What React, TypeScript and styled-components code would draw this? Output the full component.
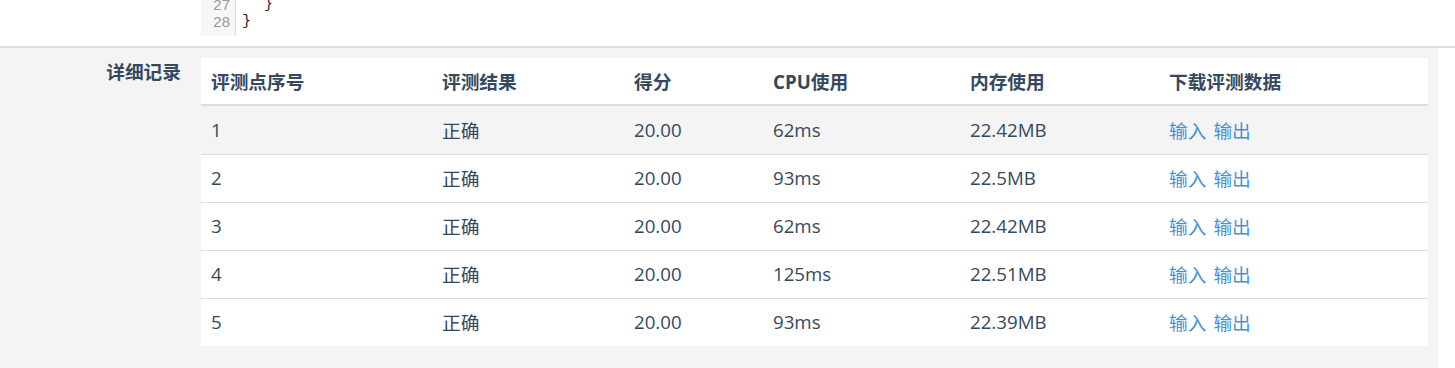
import React from 'react'
import styled, { createGlobalStyle, css } from 'styled-components'

const GlobalStyle = createGlobalStyle`
  html, body {
    margin: 0;
    padding: 0;
    background: #fff;
  }
  body {
    font-family: "Open Sans", "Noto Sans CJK SC", sans-serif;
    color: #34495e;
  }
`

const records = [
  { id: 1, result: '正确', score: '20.00', cpu: '62ms', mem: '22.42MB' },
  { id: 2, result: '正确', score: '20.00', cpu: '93ms', mem: '22.5MB' },
  { id: 3, result: '正确', score: '20.00', cpu: '62ms', mem: '22.42MB' },
  { id: 4, result: '正确', score: '20.00', cpu: '125ms', mem: '22.51MB' },
  { id: 5, result: '正确', score: '20.00', cpu: '93ms', mem: '22.39MB' },
]

// tail of the submitted source, scrolled to the bottom
const codeLines = [
  { no: 27, indent: 22, text: '}' },
  { no: 28, indent: 0, text: '}' },
]

const headers = ['评测点序号', '评测结果', '得分', 'CPU使用', '内存使用', '下载评测数据']

function App() {
  return (
    <Page>
      <GlobalStyle />
      <CodeArea>
        <CodeView>
          <Gutter>
            {codeLines.map((l) => (
              <LineNo key={l.no}>{l.no}</LineNo>
            ))}
          </Gutter>
          <CodeBody>
            {codeLines.map((l) => (
              <CodeText key={l.no} indent={l.indent}>
                {l.text}
              </CodeText>
            ))}
          </CodeBody>
        </CodeView>
      </CodeArea>

      <Section>
        <Label>详细记录</Label>
        <Table>
          <HeadRow>
            {headers.map((h) => (
              <HeadCell key={h}>{h}</HeadCell>
            ))}
          </HeadRow>
          {records.map((r, i) => (
            <Row key={r.id} first={i === 0} striped={i === 0}>
              <Cell>{r.id}</Cell>
              <Cell>{r.result}</Cell>
              <Cell>{r.score}</Cell>
              <Cell>{r.cpu}</Cell>
              <Cell>{r.mem}</Cell>
              <Cell>
                <Links>
                  <Link href="#">输入</Link>
                  <Link href="#">输出</Link>
                </Links>
              </Cell>
            </Row>
          ))}
        </Table>
      </Section>
    </Page>
  )
}

const Page = styled.div`
  width: 1455px;
  height: 368px;
  overflow: hidden;
`

const CodeArea = styled.div`
  height: 46px;
  padding-left: 201px;
  border-bottom: 2px solid #dddddd;
  background: #fff;
`

const CodeView = styled.div`
  height: 36px;
  overflow: hidden;
  display: flex;
`

const Gutter = styled.div`
  width: 35px;
  box-sizing: border-box;
  padding: 0 5px 6px 0;
  background: #f7f7f7;
  border-right: 1px solid #dddddd;
  display: flex;
  flex-direction: column;
  justify-content: flex-end;
`

const LineNo = styled.div`
  flex-shrink: 0;
  height: 17px;
  line-height: 17px;
  text-align: right;
  color: #999999;
  font-family: "Liberation Sans", sans-serif;
  font-size: 15px;
`

const CodeBody = styled.div`
  flex: 1;
  padding-bottom: 6px;
  display: flex;
  flex-direction: column;
  justify-content: flex-end;
`

const CodeText = styled.div<{ indent: number }>`
  flex-shrink: 0;
  height: 17px;
  line-height: 17px;
  padding-left: ${({ indent }) => 6 + indent}px;
  font-family: "Liberation Mono", monospace;
  font-size: 15px;
  color: #222;
`

const Section = styled.div`
  width: 1438px;
  height: 320px;
  box-sizing: border-box;
  background: #f4f4f4;
  padding: 10px 10px 0 0;
  display: grid;
  grid-template-columns: 181px 1fr;
  column-gap: 20px;
  align-items: start;
`

const Label = styled.div`
  text-align: right;
  font-weight: 700;
  font-size: 18.7px;
  line-height: 25px;
  padding-top: 1px;
  color: #34495e;
`

const Table = styled.div`
  background: #fff;
  font-size: 18.7px;
`

const columns = css`
  display: grid;
  grid-template-columns: 231px 192px 139px 197px 199px 1fr;
  align-items: center;
`

const HeadRow = styled.div`
  ${columns};
  height: 48px;
  box-sizing: border-box;
  border-bottom: 2px solid #dddddd;
`

const HeadCell = styled.div`
  padding: 0 10px 1px;
  font-weight: 700;
  color: #34495e;
`

const Row = styled.div<{ first: boolean; striped: boolean }>`
  ${columns};
  height: 48px;
  box-sizing: border-box;
  padding-bottom: 2px;
  border-top: ${({ first }) => (first ? 'none' : '1px solid #dddddd')};
  background: ${({ striped }) => (striped ? '#f4f4f4' : '#fff')};
`

const Cell = styled.div`
  padding: 0 10px;
  color: #34495e;
  white-space: nowrap;
`

const Links = styled.div`
  display: flex;
  gap: 7px;
`

const Link = styled.a`
  color: #4a90d2;
  text-decoration: none;
`

export default App
